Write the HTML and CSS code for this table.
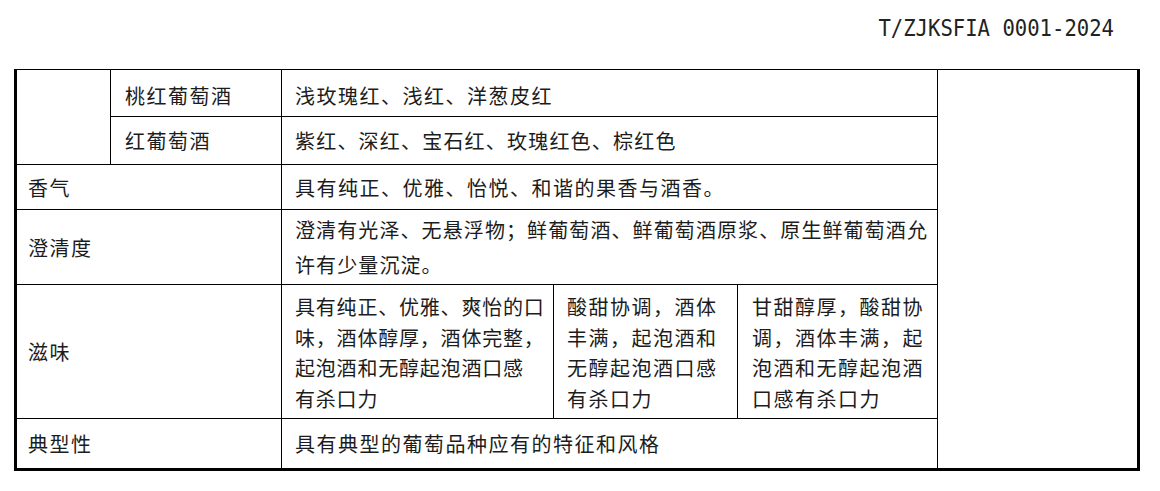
FILE: index.html
```html
<!DOCTYPE html>
<html lang="zh-CN">
<head>
<meta charset="utf-8">
<title>T/ZJKSFIA 0001-2024</title>
<link rel="stylesheet" href="styles.css">
</head>
<body>
<header class="doc-head"><span class="doc-code">T/ZJKSFIA 0001-2024</span></header>
<div class="spec">
  <div class="cell c-empty-a"></div>
  <div class="cell c-sub r1">桃红葡萄酒</div>
  <div class="cell c-val r1 v-r1">浅玫瑰红、浅红、洋葱皮红</div>
  <div class="cell c-side"></div>
  <div class="cell c-sub r2">红葡萄酒</div>
  <div class="cell c-val r2 v-r2">紫红、深红、宝石红、玫瑰红色、棕红色</div>
  <div class="cell c-label r3">香气</div>
  <div class="cell c-val r3">具有纯正、优雅、怡悦、和谐的果香与酒香。</div>
  <div class="cell c-label r4">澄清度</div>
  <div class="cell c-val r4 v-two">澄清有光泽、无悬浮物；鲜葡萄酒、鲜葡萄酒原浆、原生鲜葡萄酒允<br>许有少量沉淀。</div>
  <div class="cell c-label r5">滋味</div>
  <div class="cell c-taste t1">具有纯正、优雅、爽怡的口<br>味，酒体醇厚，酒体完整，<br>起泡酒和无醇起泡酒口感<br>有杀口力</div>
  <div class="cell c-taste t2">酸甜协调，酒体<br>丰满，起泡酒和<br>无醇起泡酒口感<br>有杀口力</div>
  <div class="cell c-taste t3">甘甜醇厚，酸甜协<br>调，酒体丰满，起<br>泡酒和无醇起泡酒<br>口感有杀口力</div>
  <div class="cell c-label r6">典型性</div>
  <div class="cell c-val r6">具有典型的葡萄品种应有的特征和风格</div>
</div>
</body>
</html>
```
FILE: styles.css
```css
html, body {
  margin: 0;
  padding: 0;
  background: #fff;
}
body {
  width: 1160px;
  height: 491px;
  overflow: hidden;
  font-family: "Noto Sans CJK SC", "Noto Sans", sans-serif;
  color: #1c1c1c;
}
.doc-head {
  height: 69px;
  box-sizing: border-box;
  padding: 17px 46px 0 0;
  text-align: right;
}
.doc-code {
  display: inline-block;
  font-family: "DejaVu Sans Mono", "Liberation Mono", monospace;
  font-size: 20.6px;
  line-height: 24px;
  color: #222;
  transform: scaleY(1.13);
  transform-origin: 0 19px;
}
.spec {
  margin-left: 14px;
  width: 1120px;
  border-left: 3px solid #000;
  border-right: 3px solid #000;
  border-bottom: 3px solid #000;
  border-top: 1px solid #000;
  background: #000;
  display: grid;
  grid-template-columns: 93px 170px 271px 183px 199px 199px;
  grid-template-rows: 46px 47px 44px 74px 133px 49px;
  gap: 1px;
}
.cell {
  background: #fff;
  font-size: 20px;
  letter-spacing: 1.5px;
  white-space: nowrap;
  display: flex;
  align-items: center;
  padding-left: 12px;
}
.c-empty-a { grid-column: 1; grid-row: 1 / 3; }
.c-side { grid-column: 6; grid-row: 1 / 7; }
.c-sub { grid-column: 2; padding-left: 14px; }
.c-val { grid-column: 3 / 6; padding-left: 13px; }
.c-label { grid-column: 1 / 3; padding-left: 11px; }
.r1 { grid-row: 1; padding-top: 4px; }
.r2 { grid-row: 2; }
.r3 { grid-row: 3; }
.r4 { grid-row: 4; }
.r5 { grid-row: 5; }
.r6 { grid-row: 6; }
.v-r2 { letter-spacing: 1.2px; }
.v-two { line-height: 35px; letter-spacing: 1.1px; }
.c-taste {
  grid-row: 5;
  align-items: flex-start;
  line-height: 30.5px;
  padding-top: 7px;
  padding-left: 13px;
}
.t1 { grid-column: 3; letter-spacing: 0.8px; }
.t2 { grid-column: 4; }
.t3 { grid-column: 5; padding-left: 14px; }
```
